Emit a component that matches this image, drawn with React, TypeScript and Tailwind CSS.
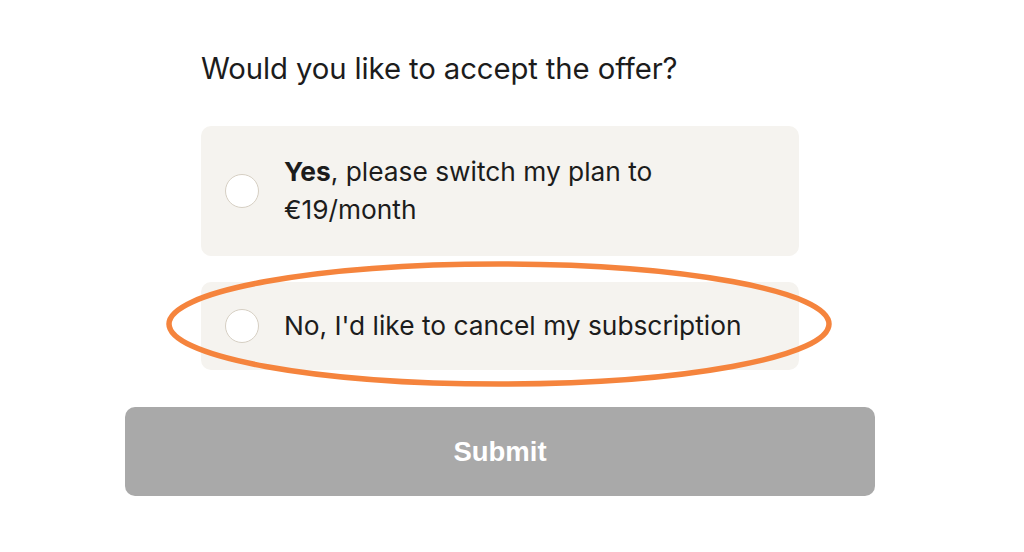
import React from "react";

const font = { fontFamily: "Inter, 'Noto Sans', sans-serif" };

function Radio() {
    return <span className="block w-[34px] h-[34px] shrink-0 rounded-full bg-white border-[1.5px] border-[#d6cfc3]" />;
}

export default function App() {
    return (
        <div className="w-[1024px] h-[552px] bg-white flex flex-col items-center pt-[48px] pr-[24px]" style={font}>
            {/* Question */}
            <div className="w-[598px]">
                <h2 className="text-[29.3px] leading-[42px] text-[#1c1c1c] font-normal tracking-[-0.1px]">
                    Would you like to accept the offer?
                </h2>

                <div className="mt-[36px] flex flex-col gap-[26px]">
                    <label className="h-[130px] rounded-[10px] bg-[#f5f3ef] flex items-center pl-[24px] pr-6">
                        <Radio />
                        <span className="ml-[25px] text-[26.3px] leading-[38px] text-[#1c1c1c]">
                            <b className="font-bold">Yes</b>, please switch my plan to
                            <br />
                            €19/month
                        </span>
                    </label>

                    <div className="relative">
                        <label className="h-[88px] rounded-[10px] bg-[#f5f3ef] flex items-center pl-[24px] pr-6">
                            <Radio />
                            <span className="ml-[25px] text-[26.3px] leading-[38px] text-[#1c1c1c]">
                                No, I'd like to cancel my subscription
                            </span>
                        </label>
                        {/* highlight ring */}
                        <svg className="absolute left-[-36px] top-[-22px] pointer-events-none" width="670" height="130" viewBox="0 0 670 130">
                            <ellipse cx="334" cy="64" rx="330" ry="60" fill="none" stroke="#f5843d" strokeWidth="5.5" />
                        </svg>
                    </div>
                </div>
            </div>

            <button
                className="mt-[37px] w-[750px] h-[89px] rounded-[10px] bg-[#a9a9a9] text-white text-[27.5px] font-bold"
                style={{ fontFamily: "'Liberation Sans', Arial, sans-serif" }}
            >
                Submit
            </button>
        </div>
    );
}
